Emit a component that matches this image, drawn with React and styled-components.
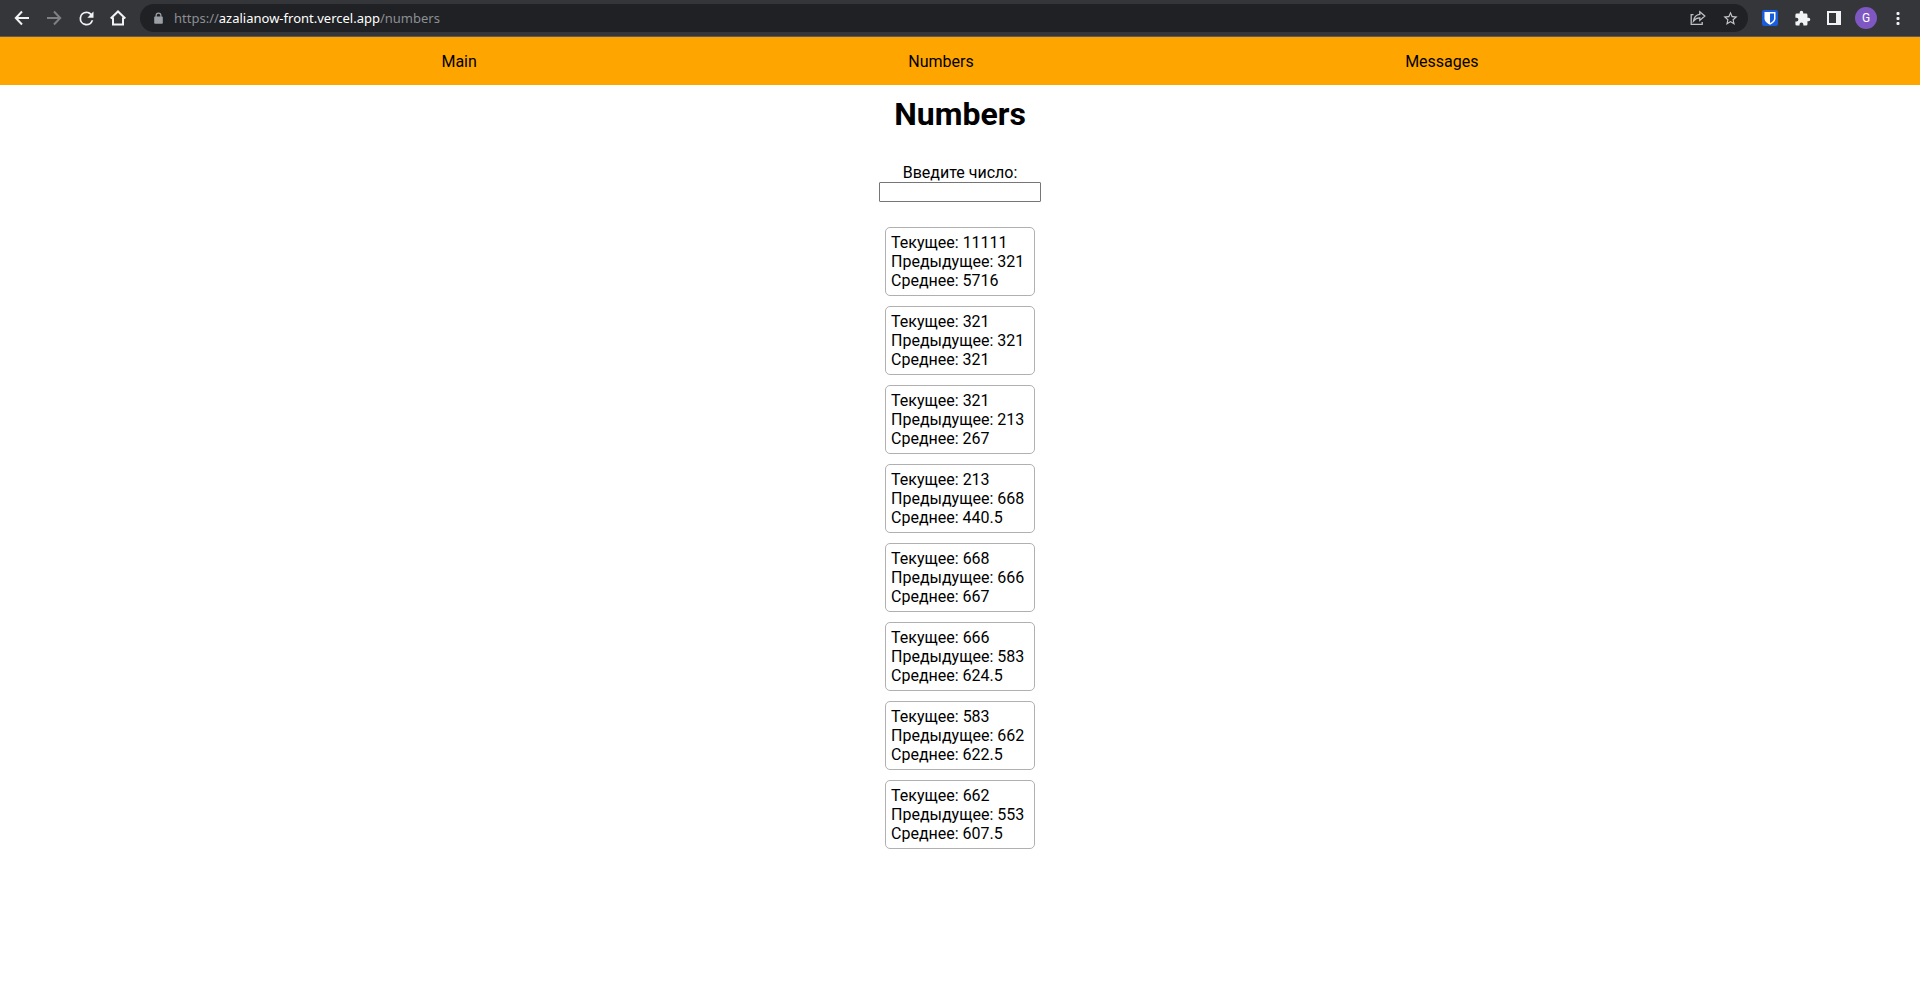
import React from 'react';
import styled, { createGlobalStyle } from 'styled-components';

const GlobalStyle = createGlobalStyle`
  *, *::before, *::after { box-sizing: border-box; }
  body {
    margin: 0;
    background: #fff;
    color: #000;
    font: 16px/19px Roboto, sans-serif;
  }
`;

const BrowserBar = styled.header`
  display: flex;
  align-items: center;
  height: 37px;
  padding: 0 6px 0 8px;
  background: #35363a;
  border-bottom: 1px solid #5a5b5f;
`;

const BarGroup = styled.div`
  display: flex;
  align-items: center;
`;

const IconButton = styled.button`
  display: flex;
  align-items: center;
  justify-content: center;
  flex: none;
  width: ${(p) => p.$width || 32}px;
  height: 28px;
  padding: 0;
  border: 0;
  background: none;
  color: ${(p) => p.$color || '#f1f3f4'};
`;

const AddressBar = styled.div`
  display: flex;
  align-items: center;
  flex: 1;
  min-width: 0;
  height: 28px;
  margin: 0 6px 0 4px;
  padding: 0 2px 0 12px;
  border-radius: 14px;
  background: #202124;
  color: #9aa0a6;
`;

const Url = styled.div`
  flex: 1;
  min-width: 0;
  margin-left: 9px;
  overflow: hidden;
  white-space: nowrap;
  color: #8b8f94;
  font: 13px/20px 'Noto Sans', 'Open Sans', sans-serif;
`;

const Host = styled.span`
  color: #fff;
`;

const Avatar = styled.span`
  display: flex;
  align-items: center;
  justify-content: center;
  width: 22px;
  height: 22px;
  border-radius: 50%;
  background: #7e57c2;
  color: #fff;
  font: 12px/22px Roboto, sans-serif;
`;

const Nav = styled.nav`
  display: flex;
  align-items: center;
  justify-content: space-evenly;
  height: 48px;
  padding: 0 10px;
  background: orange;
`;

const NavLink = styled.a`
  color: #000;
  text-decoration: none;
`;

const Page = styled.main`
  display: flex;
  flex-direction: column;
  align-items: center;
  padding: 10px;
`;

const Title = styled.h1`
  margin: 0;
  font-size: 32px;
  line-height: 38px;
`;

const Form = styled.form`
  display: flex;
  flex-direction: column;
  align-items: center;
  margin: 30px 0 25px;
`;

const NumberInput = styled.input`
  width: 162px;
  height: 20px;
  padding: 1px 2px;
  border: 1px solid #767676;
  border-radius: 1px;
  background: #fff;
`;

const List = styled.ul`
  display: flex;
  flex-direction: column;
  gap: 10px;
  margin: 0;
  padding: 0;
  list-style: none;
`;

const Card = styled.li`
  min-width: 150px;
  padding: 5px;
  border: 1px solid #b0b0b0;
  border-radius: 5px;
`;

const links = ['Main', 'Numbers', 'Messages'];

const records = [
  ['11111', '321', '5716'],
  ['321', '321', '321'],
  ['321', '213', '267'],
  ['213', '668', '440.5'],
  ['668', '666', '667'],
  ['666', '583', '624.5'],
  ['583', '662', '622.5'],
  ['662', '553', '607.5'],
];

const Stroke = ({ size = 16, width = 2, children }) => (
  <svg width={size} height={size} viewBox="0 0 16 16" fill="none" stroke="currentColor" strokeWidth={width} aria-hidden="true">
    {children}
  </svg>
);

const Solid = ({ size, box = 24, children }) => (
  <svg width={size} height={size} viewBox={`0 0 ${box} ${box}`} fill="currentColor" aria-hidden="true">
    {children}
  </svg>
);

function BrowserChrome() {
  return (
    <BrowserBar>
      <BarGroup>
        <IconButton $width={28} aria-label="Back">
          <Stroke><path d="M15 8H2M8 1.5L1.8 8L8 14.5" /></Stroke>
        </IconButton>
        <IconButton $width={36} $color="#7f8084" aria-label="Forward">
          <Stroke><path d="M1 8H14M8 1.5L14.2 8L8 14.5" /></Stroke>
        </IconButton>
        <IconButton $width={28} aria-label="Reload">
          <Solid size={21}>
            <path d="M17.65 6.35A7.96 7.96 0 0 0 12 4a8 8 0 1 0 7.73 10h-2.08A6 6 0 1 1 12 6c1.66 0 3.14.69 4.22 1.78L13 11h7V4z" />
          </Solid>
        </IconButton>
        <IconButton $width={36} aria-label="Home">
          <Stroke><path d="M.7 8.4L8 1.5L15.3 8.4M3 7.5V14.5H13V7.5" /></Stroke>
        </IconButton>
      </BarGroup>
      <AddressBar>
        <Solid size={13} box={13}>
          <path d="M3.5 4.5V3.5a3 3 0 0 1 6 0V4.5h.5a.8.8 0 0 1 .8.8V11a.8.8 0 0 1-.8.8H3a.8.8 0 0 1-.8-.8V5.3a.8.8 0 0 1 .8-.8zM4.7 4.5H8.3V3.5a1.8 1.8 0 0 0-3.6 0z" />
        </Solid>
        <Url>https://<Host>azalianow-front.vercel.app</Host>/numbers</Url>
        <IconButton $color="#bdc1c6" aria-label="Share">
          <Stroke width={1.3}>
            <path d="M3.5 4.7H1.2V14.3H12.2V12" />
            <path d="M9.8 1.8L14.8 6.1L9.8 10.4V7.9C7 7.9 5 9 3.5 11C4 7.2 6.3 4.7 9.8 4.3Z" />
          </Stroke>
        </IconButton>
        <IconButton $color="#c4c7cb" aria-label="Bookmark">
          <Solid size={17}>
            <path d="M22 9.24l-7.19-.62L12 2 9.19 8.63 2 9.24l5.46 4.73L5.82 21 12 17.27 18.18 21l-1.63-7.03zM12 15.4l-3.76 2.27 1-4.28-3.32-2.88 4.38-.38L12 6.1l1.71 4.04 4.38.38-3.32 2.88 1 4.28z" />
          </Solid>
        </IconButton>
      </AddressBar>
      <BarGroup>
        <IconButton aria-label="Password manager">
          <svg width="16" height="16" viewBox="0 0 16 16" aria-hidden="true">
            <rect width="16" height="16" rx="2" fill="#175ddc" />
            <path d="M2.5 2H13.5V8.5C13.5 11.5 10.5 13.5 8 14.7C5.5 13.5 2.5 11.5 2.5 8.5Z" fill="#fff" />
            <path d="M8 3.5H12V8.5C12 10.5 10 12 8 13Z" fill="#175ddc" />
          </svg>
        </IconButton>
        <IconButton aria-label="Extensions">
          <Solid size={17}>
            <path d="M20.5 11H19V7a2 2 0 0 0-2-2h-4V3.5a2.5 2.5 0 0 0-5 0V5H4a2 2 0 0 0-2 2v3.8h1.5a2.7 2.7 0 0 1 0 5.4H2V20a2 2 0 0 0 2 2h3.8v-1.5a2.7 2.7 0 0 1 5.4 0V22H17a2 2 0 0 0 2-2v-4h1.5a2.5 2.5 0 0 0 0-5z" />
          </Solid>
        </IconButton>
        <IconButton aria-label="Side panel">
          <Solid size={14} box={14}>
            <path fillRule="evenodd" d="M0 0H14V14H0ZM2 2V12H9V2Z" />
          </Solid>
        </IconButton>
        <IconButton aria-label="Profile"><Avatar>G</Avatar></IconButton>
        <IconButton aria-label="Menu">
          <Solid size={14} box={14}>
            <rect x="5.5" y="1" width="3" height="3" rx="1" />
            <rect x="5.5" y="6" width="3" height="3" rx="1" />
            <rect x="5.5" y="11" width="3" height="3" rx="1" />
          </Solid>
        </IconButton>
      </BarGroup>
    </BrowserBar>
  );
}

export default function App() {
  return (
    <>
      <GlobalStyle />
      <BrowserChrome />
      <Nav>
        {links.map((name) => (
          <NavLink key={name} href={`#${name.toLowerCase()}`}>{name}</NavLink>
        ))}
      </Nav>
      <Page>
        <Title>Numbers</Title>
        <Form>
          <label htmlFor="number">Введите число:</label>
          <NumberInput id="number" type="text" />
        </Form>
        <List>
          {records.map(([current, previous, average], i) => (
            <Card key={i}>
              <div>Текущее: {current}</div>
              <div>Предыдущее: {previous}</div>
              <div>Среднее: {average}</div>
            </Card>
          ))}
        </List>
      </Page>
    </>
  );
}
